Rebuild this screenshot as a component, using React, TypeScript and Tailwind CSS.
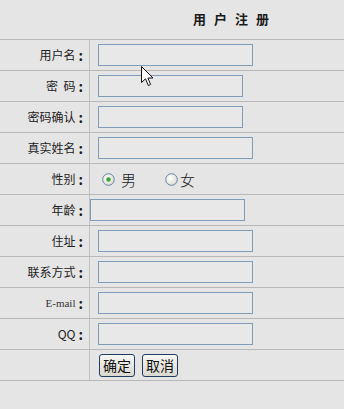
const rows: { label: string; input?: string; serif?: boolean }[] = [
  { label: '用户名', input: 'w-[155px] ml-[8px]' },
  { label: '密\u00a0\u00a0码', input: 'w-[145px] ml-[8px]' },
  { label: '密码确认', input: 'w-[145px] ml-[8px]' },
  { label: '真实姓名', input: 'w-[155px] ml-[8px]' },
  { label: '性别' },
  { label: '年龄', input: 'w-[155px] ml-0' },
  { label: '住址', input: 'w-[155px] ml-[8px]' },
  { label: '联系方式', input: 'w-[155px] ml-[8px]' },
  { label: 'E-mail', input: 'w-[155px] ml-[8px]', serif: true },
  { label: 'QQ', input: 'w-[155px] ml-[8px]' },
];

function Radio({ checked }: { checked?: boolean }) {
  return (
    <svg width="13" height="13" viewBox="0 0 13 13">
      <defs>
        <radialGradient id={checked ? 'rg1' : 'rg2'} cx="0.4" cy="0.4" r="0.7">
          <stop offset="0" stopColor="#ffffff" />
          <stop offset="1" stopColor="#d6d6ce" />
        </radialGradient>
      </defs>
      <circle cx="6.5" cy="6.5" r="5.8" fill={`url(#${checked ? 'rg1' : 'rg2'})`} stroke="#6a85a4" strokeWidth="1" />
      {checked && <circle cx="6.5" cy="6.5" r="2.3" fill="#3fa83a" />}
    </svg>
  );
}

function Cursor() {
  return (
    <svg
      width="13"
      height="22"
      viewBox="0 0 13 22"
      className="absolute left-[141px] top-[66px] pointer-events-none"
    >
      <path
        d="M0.5 0.5 L0.5 16.5 L4.5 12.8 L7.3 19.5 L9.6 18.5 L6.9 12 L12 12 Z"
        fill="#ffffff"
        stroke="#111111"
        strokeWidth="1"
        strokeLinejoin="round"
      />
    </svg>
  );
}

export default function App() {
  return (
    <div
      className="relative w-[344px] h-[409px] bg-[#e5e5e5] text-[#1a1a1a] overflow-hidden"
      style={{ fontFamily: '"Noto Sans CJK SC", "Noto Sans", sans-serif' }}
    >
      {/* 标题 */}
      <div className="h-[40px] border-b border-[#b8b8b8] flex items-center pl-[193px] pb-[2px]">
        <span className="text-[13px] font-bold tracking-[8px] leading-none">用户注册</span>
      </div>

      {rows.map((r) => (
        <div key={r.label} className="flex h-[31px] border-b border-[#b8b8b8]">
          <div className="w-[90px] shrink-0 border-r border-[#c2c2c2] flex items-center justify-end pr-[6px]">
            <span
              className={
                r.serif
                  ? 'text-[11px] text-[#333]'
                  : 'text-[12px] text-[#222]'
              }
              style={r.serif ? { fontFamily: '"Liberation Serif", serif' } : undefined}
            >
              {r.label}
            </span>
            <span className="text-[14px] font-bold ml-[3px] leading-none">:</span>
          </div>
          <div className="flex items-center">
            {r.input ? (
              <div className={`${r.input} h-[22px] border border-[#7f9db9] bg-[#e8e8e8]`} />
            ) : (
              <div className="flex items-center ml-[12px] text-[15px] font-light leading-none">
                <Radio checked />
                <span className="ml-[6px]">男</span>
                <span className="ml-[29px] flex items-center">
                  <Radio />
                  <span className="ml-[2px]">女</span>
                </span>
              </div>
            )}
          </div>
        </div>
      ))}

      {/* 按钮 */}
      <div className="flex h-[31px] border-b border-[#b8b8b8]">
        <div className="w-[90px] shrink-0 border-r border-[#c2c2c2]" />
        <div className="flex items-center gap-[7px] pl-[9px]">
          <button className="w-[36px] h-[23px] rounded-[3px] border border-[#203c60] bg-gradient-to-b from-[#f7f7f3] to-[#d9d8cf] text-[14px] leading-none text-[#111]">
            确定
          </button>
          <button className="w-[36px] h-[23px] rounded-[3px] border border-[#203c60] bg-gradient-to-b from-[#f7f7f3] to-[#d9d8cf] text-[14px] leading-none text-[#111]">
            取消
          </button>
        </div>
      </div>

      <Cursor />
    </div>
  );
}
